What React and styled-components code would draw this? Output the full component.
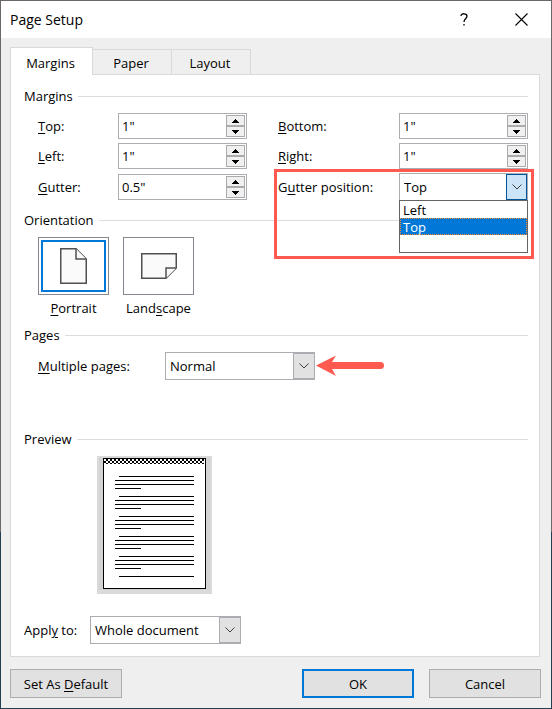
import React, { useState } from "react"
import styled, { createGlobalStyle, css } from "styled-components"

const GlobalStyle = createGlobalStyle`
  *, *::before, *::after {
    box-sizing: border-box;
  }

  body {
    margin: 0;
    background: #ffffff;
  }

  body, button, input, select {
    font-family: "Open Sans", "Noto Sans", sans-serif;
    font-size: 13px;
    line-height: 18px;
    color: #000000;
  }
`

const Dialog = styled.div`
  padding: 1px;
  background: linear-gradient(#69676a 75%, #243f50 75%);
`

const TitleBar = styled.header`
  display: flex;
  align-items: center;
  height: 37px;
  padding: 0 8px 0 9px;
  background: #ffffff;
`

const Title = styled.h1`
  flex: 1;
  margin: 0;
  font-size: 14px;
  font-weight: 400;
  line-height: 20px;
`

const TitleButton = styled.button`
  display: flex;
  align-items: center;
  justify-content: center;
  width: 44px;
  height: 36px;
  margin-left: 13px;
  padding: 0;
  border: 0;
  background: transparent;
`

const Body = styled.main`
  padding: 9px 11px 10px 9px;
  background: #efefef;
`

const Tabs = styled.div`
  position: relative;
  display: flex;
  align-items: flex-end;
  margin-bottom: -1px;
`

const Tab = styled.button`
  width: 79px;
  height: 26px;
  padding: 2px 2px 0 0;
  border: 1px solid #d9d9d9;
  border-left: 0;
  background: #efefef;

  ${props => props.$active && css`
    width: 83px;
    height: 28px;
    border-left: 1px solid #d9d9d9;
    border-bottom: 0;
    background: #ffffff;
  `}
`

const Panel = styled.div`
  padding: 12px 11px 12px 13px;
  border: 1px solid #d9d9d9;
  background: #ffffff;
`

const Section = styled.section`
  margin-bottom: ${props => props.$space || 10}px;
`

const SectionTitle = styled.h2`
  display: flex;
  align-items: center;
  gap: 5px;
  margin: 0 0 8px;
  font-size: 13px;
  font-weight: 400;
  line-height: 18px;

  &::after {
    content: "";
    flex: 1;
    height: 1px;
    background: #dcdcdc;
  }
`

const MarginGrid = styled.div`
  display: grid;
  grid-template-columns: 80px minmax(0, 1fr) 152px minmax(0, 1fr);
  grid-template-rows: 26px 26px 28px;
  row-gap: 4px;
  align-items: center;
  padding-left: 14px;
`

const Label = styled.label`
  white-space: nowrap;
  padding-left: ${props => (props.$second ? 31 : 0)}px;
`

const Key = styled.span`
  text-decoration: underline;
  text-underline-offset: 2px;
`

const SpinBox = styled.div`
  display: flex;
  height: 26px;
  padding: 1px;
  border: 1px solid #abadb3;
  background: #ffffff;
`

const SpinInput = styled.input`
  flex: 1;
  min-width: 0;
  padding: 0 2px;
  border: 0;
  outline: 0;
  background: transparent;
  line-height: 20px;
`

const SpinButtons = styled.div`
  display: grid;
  grid-template-rows: 1fr 1fr;
  width: 19px;
`

const SpinButton = styled.button`
  display: flex;
  align-items: center;
  justify-content: center;
  padding: 0;
  border: 1px solid #ababab;
  background: #f0f0f0;
`

const SelectBox = styled.div`
  display: grid;
  grid-template-columns: minmax(0, 1fr) 22px;
  width: ${props => props.$width || "100%"};
  height: 28px;
`

const NativeSelect = styled.select`
  grid-area: 1 / 1 / 2 / 3;
  min-width: 0;
  padding: 0 24px 0 4px;
  border: 1px solid #abadb3;
  border-radius: 0;
  outline: 0;
  background: #ffffff;
  appearance: none;
`

const SelectArrow = styled.span`
  grid-area: 1 / 2 / 2 / 3;
  display: flex;
  align-items: center;
  justify-content: center;
  margin: 1px 0;
  border: 1px solid ${props => (props.$open ? "#005499" : "#abadb3")};
  margin-right: ${props => (props.$open ? 1 : 0)}px;
  background: ${props => (props.$open ? "#cce4f7" : "#e1e1e1")};
  pointer-events: none;
`

const GutterPosition = styled.div`
  position: relative;
  grid-column: 3 / 5;
  display: grid;
  grid-template-columns: 152px minmax(0, 1fr);
  align-items: center;
`

const Highlight = styled.div`
  position: absolute;
  top: -4px;
  right: -6px;
  left: 27px;
  height: 90px;
  border: 3px solid #ff5a50;
  pointer-events: none;
`

const DropList = styled.ul`
  position: absolute;
  top: 27px;
  right: 0;
  left: 152px;
  height: 53px;
  margin: 0;
  padding: 0;
  border: 1px solid #646464;
  background: #ffffff;
  list-style: none;
`

const DropItem = styled.li`
  padding: 1px 3px 0;
  line-height: 16px;
  color: ${props => (props.$selected ? "#ffffff" : "#000000")};
  background: ${props => (props.$selected ? "#0078d7" : "#ffffff")};
  outline: ${props => (props.$selected ? "1px dotted #ff8728" : "0")};
  outline-offset: -1px;
`

const Orientations = styled.div`
  display: flex;
  gap: 14px;
  padding-left: 14px;
`

const Orientation = styled.button`
  display: flex;
  flex-direction: column;
  align-items: center;
  gap: 4px;
  width: 71px;
  height: 79px;
  padding: 0;
  border: 0;
  background: transparent;
`

const OrientationFrame = styled.span`
  display: flex;
  flex: none;
  width: 71px;
  height: 58px;
  padding: 2px;
  border: 1px solid #82878f;
  background: #ffffff;
`

const OrientationInner = styled.span`
  flex: 1;
  display: flex;
  align-items: center;
  justify-content: center;
  border: 2px solid ${props => (props.$active ? "#0078d7" : "transparent")};
`

const Row = styled.div`
  display: flex;
  align-items: center;
  padding-left: ${props => props.$indent || 0}px;
`

const RowLabel = styled.label`
  width: ${props => props.$width}px;
  white-space: nowrap;
`

const PreviewArt = styled.svg`
  display: block;
  margin-left: 73px;
`

const Footer = styled.footer`
  display: flex;
  gap: 15px;
  margin: 12px -1px 0 0;
`

const Button = styled.button`
  width: 112px;
  height: 29px;
  margin-right: ${props => props.$push || "0"};
  padding: 0;
  border: ${props => (props.$primary ? "2px solid #0078d7" : "1px solid #adadad")};
  background: #e1e1e1;
`

const Chevron = () => (
  <svg width="10" height="6" viewBox="0 0 10 6" fill="none" stroke="#404040">
    <path d="M0.5 0.5 L5 5 L9.5 0.5" />
  </svg>
)

const Triangle = ({ down }) => (
  <svg width="7" height="4" viewBox="0 0 7 4" shapeRendering="crispEdges">
    <path d={down ? "M0 0h7v1h-1v1h-1v1h-1v1h-1v-1h-1v-1h-1v-1h-1z" : "M3 0h1v1h1v1h1v1h1v1h-7v-1h1v-1h1v-1h1z"} />
  </svg>
)

const Spinner = ({ id, initial, name }) => {
  const [value, setValue] = useState(initial)
  const step = amount => {
    const next = Math.max(0, (parseFloat(value) || 0) + amount)
    setValue(`${Math.round(next * 10) / 10}"`)
  }

  return (
    <SpinBox>
      <SpinInput id={id} value={value} onChange={e => setValue(e.target.value)} />
      <SpinButtons>
        <SpinButton aria-label={`Increase ${name}`} onClick={() => step(0.1)}><Triangle /></SpinButton>
        <SpinButton aria-label={`Decrease ${name}`} onClick={() => step(-0.1)}><Triangle down /></SpinButton>
      </SpinButtons>
    </SpinBox>
  )
}

const Select = ({ id, width, open, children, ...rest }) => (
  <SelectBox $width={width}>
    <NativeSelect id={id} {...rest}>{children}</NativeSelect>
    <SelectArrow $open={open}><Chevron /></SelectArrow>
  </SelectBox>
)

const PortraitIcon = () => (
  <svg width="27" height="36" viewBox="0 0 27 36" fill="#fafafa" stroke="#505050" strokeWidth="1.5">
    <path d="M0.75 0.75 H16 L26.25 11 V35.25 H0.75 Z" />
    <path d="M16 0.75 V11 H26.25" />
  </svg>
)

const LandscapeIcon = () => (
  <svg width="36" height="26" viewBox="0 0 36 26" fill="#fafafa" stroke="#505050" strokeWidth="1.5">
    <path d="M0.75 0.75 H35.25 V15 L25 25.25 H0.75 Z" />
    <path d="M25 25.25 V15 H35.25" />
  </svg>
)

const RedArrow = () => (
  <svg width="70" height="22" viewBox="0 0 70 22" fill="#ff5a50">
    <path d="M1 10.500 L21 0.500 L17 7 H65.500 A3.500 3.500 0 0 1 65.500 14 H17 L21 21 Z" />
  </svg>
)

const paragraphs = [20, 40, 60, 80, 100]

// checkered gutter strip, 2px squares
const checks = Array.from({ length: 25 }, (_, i) => {
  const x = 7 + i * 4
  return `M${x + 2} 3h2v2h-2z M${x} 5h2v2h-2z M${x + 2} 7h2v1h-2z`
}).join(" ")

const Preview = () => (
  <PreviewArt width="115" height="138" viewBox="0 0 115 138" shapeRendering="crispEdges" role="img" aria-label="Page preview">
    <rect width="115" height="138" fill="#dadada" />
    <rect x="2" y="2" width="111" height="132" fill="#d3d3d3" />
    <rect x="6" y="2" width="103" height="131" />
    <rect x="7" y="3" width="101" height="129" fill="#ffffff" />
    <path d={checks} />
    {paragraphs.map(y => (
      <path key={y} d={`M22 ${y}h75v1h-75z M18 ${y + 4}h79v1h-79z M18 ${y + 8}h79v1h-79z M18 ${y + 12}h26v1h-26z`} />
    ))}
    <path d="M22 120h75v1h-75z" />
  </PreviewArt>
)

const App = () => {
  const [position, setPosition] = useState("Top")
  const [orientation, setOrientation] = useState("portrait")

  return (
    <>
      <GlobalStyle />
      <Dialog role="dialog" aria-labelledby="title">
        <TitleBar>
          <Title id="title">Page Setup</Title>
          <TitleButton aria-label="Help">
            <svg width="8" height="13" viewBox="0 0 8 13" fill="none" stroke="#000000" strokeWidth="1.3">
              <path d="M1 3 C1 0 7 0 7 3.200 C7 5.500 4 5.500 4 9" />
              <path d="M4 11 V12.600" />
            </svg>
          </TitleButton>
          <TitleButton aria-label="Close">
            <svg width="13" height="13" viewBox="0 0 13 13" stroke="#000000" strokeWidth="1.1">
              <path d="M0.5 0.5 L12.5 12.5 M12.5 0.5 L0.5 12.5" />
            </svg>
          </TitleButton>
        </TitleBar>

        <Body>
          <Tabs role="tablist">
            <Tab role="tab" aria-selected="true" $active>Margins</Tab>
            <Tab role="tab" aria-selected="false">Paper</Tab>
            <Tab role="tab" aria-selected="false">Layout</Tab>
          </Tabs>

          <Panel role="tabpanel">
            <Section>
              <SectionTitle>Margins</SectionTitle>
              <MarginGrid>
                <Label htmlFor="top"><Key>T</Key>op:</Label>
                <Spinner id="top" name="top" initial={'1"'} />
                <Label htmlFor="bottom" $second><Key>B</Key>ottom:</Label>
                <Spinner id="bottom" name="bottom" initial={'1"'} />

                <Label htmlFor="left"><Key>L</Key>eft:</Label>
                <Spinner id="left" name="left" initial={'1"'} />
                <Label htmlFor="right" $second><Key>R</Key>ight:</Label>
                <Spinner id="right" name="right" initial={'1"'} />

                <Label htmlFor="gutter-size"><Key>G</Key>utter:</Label>
                <Spinner id="gutter-size" name="gutter" initial={'0.5"'} />
                <GutterPosition>
                  <Label htmlFor="position" $second>G<Key>u</Key>tter position:</Label>
                  <Select id="position" open value={position} onChange={e => setPosition(e.target.value)}>
                    <option>Left</option>
                    <option>Top</option>
                  </Select>
                  <DropList role="listbox" aria-label="Gutter position">
                    {["Left", "Top"].map(item => (
                      <DropItem
                        key={item}
                        role="option"
                        aria-selected={item === position}
                        $selected={item === position}
                        onClick={() => setPosition(item)}
                      >
                        {item}
                      </DropItem>
                    ))}
                  </DropList>
                  <Highlight />
                </GutterPosition>
              </MarginGrid>
            </Section>

            <Section>
              <SectionTitle>Orientation</SectionTitle>
              <Orientations>
                <Orientation aria-pressed={orientation === "portrait"} onClick={() => setOrientation("portrait")}>
                  <OrientationFrame>
                    <OrientationInner $active={orientation === "portrait"}><PortraitIcon /></OrientationInner>
                  </OrientationFrame>
                  <span><Key>P</Key>ortrait</span>
                </Orientation>
                <Orientation aria-pressed={orientation === "landscape"} onClick={() => setOrientation("landscape")}>
                  <OrientationFrame>
                    <OrientationInner $active={orientation === "landscape"}><LandscapeIcon /></OrientationInner>
                  </OrientationFrame>
                  <span>Land<Key>s</Key>cape</span>
                </Orientation>
              </Orientations>
            </Section>

            <Section $space={50}>
              <SectionTitle>Pages</SectionTitle>
              <Row $indent={14}>
                <RowLabel htmlFor="pages" $width={127}><Key>M</Key>ultiple pages:</RowLabel>
                <Select id="pages" width="150px">
                  <option>Normal</option>
                  <option>Mirror margins</option>
                  <option>2 pages per sheet</option>
                  <option>Book fold</option>
                </Select>
                <RedArrow />
              </Row>
            </Section>

            <Section $space={22}>
              <SectionTitle>Preview</SectionTitle>
              <Preview />
            </Section>

            <Row>
              <RowLabel htmlFor="apply" $width={66}>Appl<Key>y</Key> to:</RowLabel>
              <Select id="apply" width="151px">
                <option>Whole document</option>
                <option>This point forward</option>
              </Select>
            </Row>
          </Panel>

          <Footer>
            <Button $push="auto">Set As <Key>D</Key>efault</Button>
            <Button $primary>OK</Button>
            <Button>Cancel</Button>
          </Footer>
        </Body>
      </Dialog>
    </>
  )
}

export default App
